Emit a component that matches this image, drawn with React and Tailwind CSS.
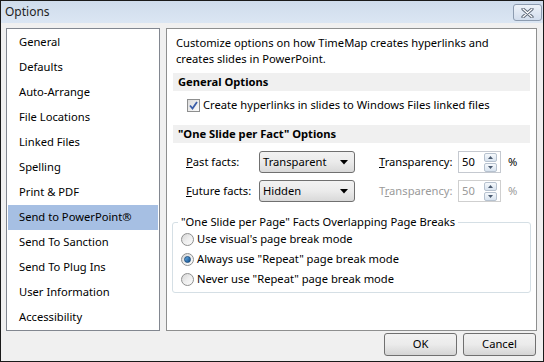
import React, { useState } from "react";

const font = { fontFamily: '"Segoe UI", "Noto Sans", "Liberation Sans", sans-serif' };

const pages = [
  "General",
  "Defaults",
  "Auto-Arrange",
  "File Locations",
  "Linked Files",
  "Spelling",
  "Print & PDF",
  "Send to PowerPoint®",
  "Send To Sanction",
  "Send To Plug Ins",
  "User Information",
  "Accessibility",
];

const Dropdown = ({ value }) => (
  <div className="w-[96px] h-[22px] border border-[#707070] rounded-[3px] bg-gradient-to-b from-[#f2f2f2] via-[#ebebeb] to-[#d9d9d9] flex items-center pl-[3px] pr-[6px] justify-between">
    <span>{value}</span>
    <svg width="8" height="5" viewBox="0 0 8 5">
      <path d="M0 0 H8 L4 4.5 Z" fill="#000" />
    </svg>
  </div>
);

const Spin = ({ disabled }) => (
  <div
    className={`w-[43px] h-[22px] border ${
      disabled ? "border-[#cfcfcf] text-[#9a9a9a]" : "border-[#c5c9d0] text-black"
    } bg-white flex items-center pl-[3px] pr-[3px] justify-between`}
  >
    <span>50</span>
    <div className="flex flex-col gap-px">
      {[0, 1].map((i) => (
        <div
          key={i}
          className="w-[13px] h-[9px] border border-[#b7c2cf] rounded-[2px] bg-gradient-to-b from-[#f6f9fc] to-[#d8e3ef] flex items-center justify-center"
        >
          <svg width="5" height="3" viewBox="0 0 5 3">
            <path d={i === 0 ? "M0 3 H5 L2.5 0 Z" : "M0 0 H5 L2.5 3 Z"} fill="#4a5a70" />
          </svg>
        </div>
      ))}
    </div>
  </div>
);

const Radio = ({ checked, label }) => (
  <div className="h-[20px] flex items-center gap-[2px]">
    <div className="w-[13px] h-[13px] rounded-full border border-[#8e8f8f] bg-gradient-to-br from-[#d5d5d5] via-[#eeeeee] to-[#fbfbfb] flex items-center justify-center">
      {checked && (
        <div className="w-[7px] h-[7px] rounded-full bg-gradient-to-br from-[#6ab1e6] to-[#0d4e8f] border border-[#1c4e7f]" />
      )}
    </div>
    <span className="ml-px">{label}</span>
  </div>
);

const Section = ({ children }) => (
  <div className="mx-[6px] h-[18px] bg-[#f0f0f0] flex items-center pl-[5px] font-bold">{children}</div>
);

export default function App() {
  const [selected, setSelected] = useState(7);
  return (
    <div
      style={font}
      className="w-[544px] h-[362px] border border-[#1a1a1a] bg-[#f0f0f0] flex flex-col text-[11.2px] text-black overflow-hidden"
    >
      {/* title bar */}
      <div className="h-[22px] flex items-center justify-between pl-[4px] pr-[1px] bg-gradient-to-b from-[#cfdcec] to-[#dbe6f3]">
        <span className="text-[12px] text-[#1e1e1e]">Options</span>
        <div className="w-[29px] h-[17px] mt-[1px] border border-[#8d9cb0] rounded-[3px] bg-gradient-to-b from-[#eef3f9] to-[#d2dded] flex items-center justify-center">
          <svg width="13" height="10" viewBox="0 0 13 10">
            <path d="M2 1 L11 9 M11 1 L2 9" stroke="#5d6878" strokeWidth="3.2" strokeLinecap="round" />
            <path d="M2 1 L11 9 M11 1 L2 9" stroke="#ffffff" strokeWidth="1.2" strokeLinecap="round" />
          </svg>
        </div>
      </div>

      {/* body */}
      <div className="flex gap-[6px] pl-[5px] pt-[5px]">
        <div className="w-[154px] h-[303px] border border-[#828790] bg-white p-px">
          {pages.map((p, i) => (
            <div
              key={p}
              onClick={() => setSelected(i)}
              className={`h-[25px] flex items-center pl-[11px] ${i === selected ? "bg-[#a6bfe3]" : ""}`}
            >
              {p}
            </div>
          ))}
        </div>

        <div className="w-[371px] h-[303px] border border-[#8e8f8f] bg-white">
          <p className="pl-[9px] pt-[6px] leading-[16px] pr-[40px]">
            Customize options on how TimeMap creates hyperlinks and creates slides in PowerPoint.
          </p>
          <div className="mt-[6px]">
            <Section>General Options</Section>
          </div>
          <div className="h-[16px] mt-[6px] flex items-center pl-[20px] gap-[2px]">
            <div className="w-[13px] h-[13px] border border-[#8e8f8f] bg-gradient-to-br from-[#dcdcdc] to-[#fbfbfb] flex items-center justify-center">
              <svg width="9" height="9" viewBox="0 0 9 9">
                <path d="M1 4.5 L3.5 7.5 L8 1" stroke="#3a5da8" strokeWidth="1.8" fill="none" />
              </svg>
            </div>
            <span className="ml-px">Create hyperlinks in slides to Windows Files linked files</span>
          </div>
          <div className="mt-[12px]">
            <Section>"One Slide per Fact" Options</Section>
          </div>
          <div className="mt-[8px] flex flex-col gap-[7px] pl-[19px]">
            <div className="flex items-center">
              <span className="w-[73px]">
                <u>P</u>ast facts:
              </span>
              <Dropdown value="Transparent" />
              <span className="ml-[24px] w-[79px]">
                <u>T</u>ransparency:
              </span>
              <Spin />
              <span className="ml-[7px]">%</span>
            </div>
            <div className="flex items-center">
              <span className="w-[73px]">
                <u>F</u>uture facts:
              </span>
              <Dropdown value="Hidden" />
              <span className="ml-[24px] w-[79px] text-[#9a9a9a]">
                T<u>r</u>ansparency:
              </span>
              <Spin disabled />
              <span className="ml-[7px] text-[#9a9a9a]">%</span>
            </div>
          </div>
          <div className="relative mx-[5px] mt-[20px] h-[71px] border border-[#d5dfe5] rounded-[3px] pt-[6px] pl-[8px]">
            <span className="absolute -top-[9px] left-[5px] bg-white px-[3px]">
              "One Slide per Page" Facts Overlapping Page Breaks
            </span>
            <Radio label="Use visual's page break mode" />
            <Radio checked label={'Always use "Repeat" page break mode'} />
            <Radio label={'Never use "Repeat" page break mode'} />
          </div>
        </div>
      </div>

      {/* buttons */}
      <div className="flex justify-end gap-[6px] pr-[7px] pt-[2px]">
        {["OK", "Cancel"].map((b) => (
          <button
            key={b}
            className="w-[73px] h-[23px] border border-[#707070] rounded-[3px] bg-gradient-to-b from-[#f2f2f2] via-[#ebebeb] to-[#d5d5d5] text-[11.2px]"
          >
            {b}
          </button>
        ))}
      </div>
    </div>
  );
}
